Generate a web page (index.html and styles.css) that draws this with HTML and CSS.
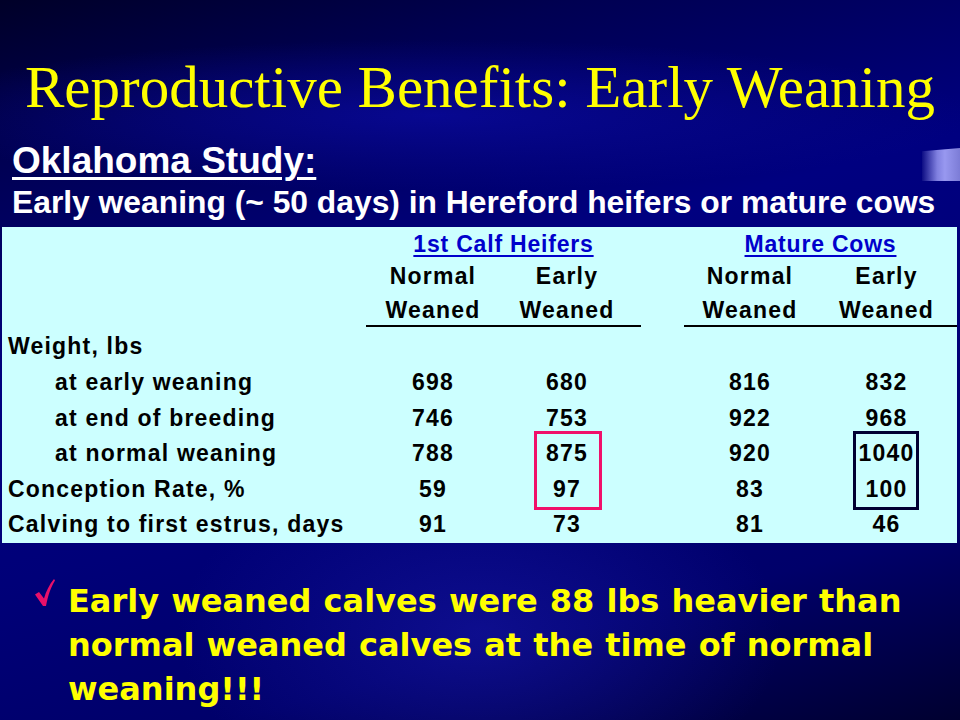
FILE: index.html
```html
<!DOCTYPE html>
<html>
<head>
<meta charset="utf-8">
<link rel="stylesheet" href="styles.css">
</head>
<body>
<div class="slide">
  <h1 class="title">Reproductive Benefits: Early Weaning</h1>
  <div class="study-row">
    <span class="study">Oklahoma Study:</span>
    <span class="tab-deco"></span>
  </div>
  <div class="sub">Early weaning (~ 50 days) in Hereford heifers or mature cows</div>

  <div class="panel">
    <div class="cell"></div>
    <div class="cell group"><span>1st Calf Heifers</span></div>
    <div class="cell"></div>
    <div class="cell group"><span>Mature Cows</span></div>

    <div class="cell"></div>
    <div class="cell c">Normal</div>
    <div class="cell c e">Early</div>
    <div class="cell"></div>
    <div class="cell c">Normal</div>
    <div class="cell c">Early</div>

    <div class="cell"></div>
    <div class="cell c ul">Weaned</div>
    <div class="cell c e ul">Weaned</div>
    <div class="cell"></div>
    <div class="cell c ul">Weaned</div>
    <div class="cell c ul">Weaned</div>

    <div class="cell lab">Weight, lbs</div>
    <div class="cell"></div>
    <div class="cell"></div>
    <div class="cell"></div>
    <div class="cell"></div>
    <div class="cell"></div>

    <div class="cell lab ind">at early weaning</div>
    <div class="cell c">698</div>
    <div class="cell c e">680</div>
    <div class="cell"></div>
    <div class="cell c">816</div>
    <div class="cell c">832</div>

    <div class="cell lab ind">at end of breeding</div>
    <div class="cell c">746</div>
    <div class="cell c e">753</div>
    <div class="cell"></div>
    <div class="cell c">922</div>
    <div class="cell c">968</div>

    <div class="cell lab ind">at normal weaning</div>
    <div class="cell c">788</div>
    <div class="cell c e">875</div>
    <div class="cell"></div>
    <div class="cell c">920</div>
    <div class="cell c">1040</div>

    <div class="cell lab">Conception Rate, %</div>
    <div class="cell c">59</div>
    <div class="cell c e">97</div>
    <div class="cell"></div>
    <div class="cell c">83</div>
    <div class="cell c">100</div>

    <div class="cell lab">Calving to first estrus, days</div>
    <div class="cell c">91</div>
    <div class="cell c e">73</div>
    <div class="cell"></div>
    <div class="cell c">81</div>
    <div class="cell c">46</div>

    <div class="box box-pink"></div>
    <div class="box box-dark"></div>
  </div>

  <div class="bullet">
    <svg class="check" width="20" height="28" viewBox="0 0 20 28">
      <path d="M0 15.5 L4 13 L9 19.5 C11 12.5 14 6 19 0 L20 1.5 C16 8 13 16 11 27 L8 27 Z" fill="#e8106a"/>
    </svg>
    <p class="bullet-text">Early weaned calves were 88 lbs heavier than<br>normal weaned calves at the time of normal<br>weaning!!!</p>
  </div>
</div>
</body>
</html>
```
FILE: styles.css
```css
html, body {
  margin: 0;
  padding: 0;
  background: #000040;
}

.slide {
  width: 960px;
  height: 720px;
  overflow: hidden;
  display: flex;
  flex-direction: column;
  background:
    radial-gradient(ellipse 45% 35% at 50% 88%, rgba(25, 25, 170, 0.55), rgba(0, 0, 0, 0) 70%),
    radial-gradient(ellipse 75% 14% at 45% 16%, rgba(10, 10, 160, 0.75), rgba(0, 0, 0, 0) 75%),
    linear-gradient(165deg, #000028 0%, #000052 16%, #000080 40%, #000078 60%, #00006a 80%, #000030 100%);
}

.title {
  margin: 55px 0 0 0;
  font-family: "Liberation Serif", "Times New Roman", serif;
  font-weight: normal;
  font-size: 59px;
  line-height: 64px;
  color: #ffff00;
  text-align: center;
  white-space: nowrap;
}

.study-row {
  margin-top: 22px;
  display: flex;
  justify-content: space-between;
  align-items: flex-start;
  height: 40px;
}

.study {
  margin-left: 12px;
  font-family: "Liberation Sans", Arial, sans-serif;
  font-weight: bold;
  font-size: 37px;
  line-height: 40px;
  color: #ffffff;
  text-decoration: underline;
  text-decoration-thickness: 3px;
  text-underline-offset: 4px;
}

.tab-deco {
  margin-top: 7px;
  width: 38px;
  height: 33px;
  background: linear-gradient(90deg, rgba(60, 60, 150, 0.2) 0%, #8080e0 40%, #9898f0 60%, #7c7cd6 100%);
  clip-path: polygon(0 10%, 100% 0, 100% 100%, 0 100%);
}

.sub {
  margin: 3px 0 0 12px;
  font-family: "Liberation Sans", Arial, sans-serif;
  font-weight: bold;
  font-size: 31.8px;
  line-height: 36px;
  color: #ffffff;
  white-space: nowrap;
}

.panel {
  position: relative;
  margin: 7px 3px 0 2px;
  height: 316px;
  background: #ccffff;
  display: grid;
  grid-template-columns: 364px 134px 141px 43px 132px 141px;
  grid-template-rows: 32px 35px 33px 38px repeat(5, 35.5px);
  font-family: "Liberation Sans", Arial, sans-serif;
  font-weight: bold;
  font-size: 23px;
  letter-spacing: 1.2px;
  color: #000000;
}

.cell {
  display: flex;
  align-items: center;
  white-space: nowrap;
  box-sizing: border-box;
}

.c {
  justify-content: center;
}

.e {
  padding-right: 7px;
}

.ul {
  border-bottom: 2px solid #000000;
  padding-top: 1px;
}

.group {
  grid-column: span 2;
  justify-content: center;
  color: #0000cc;
  letter-spacing: 0.8px;
  padding-top: 2px;
}

.group span {
  text-decoration: underline;
  text-decoration-thickness: 2px;
  text-underline-offset: 3px;
}

.lab {
  padding-left: 6px;
}

.ind {
  padding-left: 53px;
}

.box {
  position: absolute;
  grid-row: 7 / span 2;
  top: -5px;
  bottom: -3px;
  box-sizing: border-box;
  border: 3px solid;
}

.box-pink {
  grid-column: 3;
  left: 34px;
  width: 68px;
  border-color: #f0106a;
}

.box-dark {
  grid-column: 6;
  left: 37px;
  width: 66px;
  border-color: #000033;
}

.bullet {
  margin-top: 36px;
  display: flex;
  align-items: flex-start;
}

.check {
  margin: 0 0 0 35px;
  flex: none;
}

.bullet-text {
  margin: 0 0 0 13px;
  font-family: "DejaVu Sans", sans-serif;
  font-weight: bold;
  font-size: 32px;
  line-height: 44px;
  word-spacing: 1px;
  color: #ffff00;
  white-space: nowrap;
}
```
